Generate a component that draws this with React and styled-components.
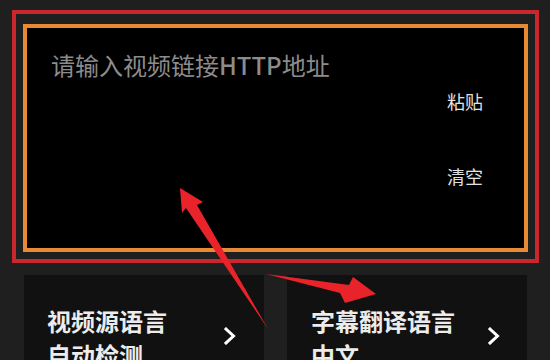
import styled, { createGlobalStyle } from 'styled-components'

const GlobalStyle = createGlobalStyle`
    html, body {
        margin: 0;
        padding: 0;
        background: #1f1f1f;
        overflow: hidden;
    }
    body {
        font-family: "Noto Sans CJK SC", "Noto Sans", sans-serif;
    }
`

const Page = styled.div`
    position: relative;
    width: 550px;
    height: 360px;
    padding: 10px 0 0 12px;
    box-sizing: border-box;
    overflow: hidden;
`

const RedFrame = styled.div`
    width: 527px;
    height: 253px;
    box-sizing: border-box;
    border: 4px solid #c9262d;
    padding: 10px 7px 7px 7px;
`

const InputBox = styled.div`
    height: 100%;
    box-sizing: border-box;
    border: 4px solid #e88a34;
    background: #000;
    display: flex;
    justify-content: space-between;
    padding: 20px 41px 0 24px;
`

const Placeholder = styled.div`
    color: #8c8c8c;
    font-size: 24px;
    line-height: 34px;

    b {
        font-weight: 500;
    }
`

const Actions = styled.div`
    display: flex;
    flex-direction: column;
    gap: 49px;
    padding-top: 40px;
`

const ActionButton = styled.div`
    color: #e2e2e2;
    font-size: 18px;
    line-height: 26px;
`

const CardRow = styled.div`
    display: flex;
    gap: 23px;
    margin: 12px 0 0 12px;
`

const Card = styled.div`
    width: 240px;
    height: 110px;
    box-sizing: border-box;
    background: #111;
    display: flex;
    align-items: flex-start;
    justify-content: space-between;
    padding: ${p => p.$right ? '29px 27px 0 24px' : '29px 28px 0 23px'};
`

const CardTitle = styled.div`
    color: #ececec;
    font-size: 24px;
    font-weight: 700;
    line-height: 34px;
`

const Chevron = styled.svg`
    margin-top: 23px;
    flex-shrink: 0;
`

const Overlay = styled.svg`
    position: absolute;
    left: 0;
    top: 0;
    pointer-events: none;
`

function Arrow() {
    return (
        <Chevron width="12" height="18" viewBox="0 0 12 18">
            <path d="M2 2 L9.5 9 L2 16" fill="none" stroke="#fff" strokeWidth="3" strokeLinecap="square" />
        </Chevron>
    )
}

export default function App() {
    return (
        <Page>
            <GlobalStyle />
            <RedFrame>
                <InputBox>
                    <Placeholder>请输入视频链接<b>HTTP</b>地址</Placeholder>
                    <Actions>
                        <ActionButton>粘贴</ActionButton>
                        <ActionButton>清空</ActionButton>
                    </Actions>
                </InputBox>
            </RedFrame>
            <CardRow>
                <Card>
                    <CardTitle>视频源语言<br />自动检测</CardTitle>
                    <Arrow />
                </Card>
                <Card $right>
                    <CardTitle>字幕翻译语言<br />中文</CardTitle>
                    <Arrow />
                </Card>
            </CardRow>
            <Overlay width="550" height="360" viewBox="0 0 550 360">
                <polygon points="180,188 203,202 197,205 268,329 186,208 182,213" fill="#e8232a" />
                <polygon points="266,274 349,285 353,277 376,294 345,303 340,293" fill="#e8232a" />
            </Overlay>
        </Page>
    )
}
